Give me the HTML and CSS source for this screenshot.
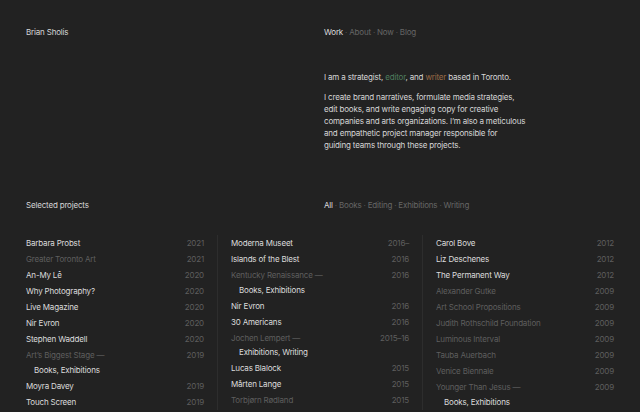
FILE: index.html
```html
<!DOCTYPE html>
<html lang="en">
<head>
<meta charset="utf-8">
<title>Brian Sholis</title>
<link rel="stylesheet" href="styles.css">
</head>
<body>
<header class="top">
  <div class="name">Brian Sholis</div>
  <nav class="nav"><span class="on">Work</span><span class="sep">·</span>About<span class="sep">·</span>Now<span class="sep">·</span>Blog</nav>
</header>

<section class="intro">
  <div></div>
  <div class="bio">
    <p>I am a strategist, <span class="green">editor</span>, and <span class="orange">writer</span> based in Toronto.</p>
    <p>I create brand narratives, formulate media strategies,<br>edit books, and write engaging copy for creative<br>companies and arts organizations. I’m also a meticulous<br>and empathetic project manager responsible for<br>guiding teams through these projects.</p>
  </div>
</section>

<section class="projhead">
  <div class="name">Selected projects</div>
  <nav class="nav"><span class="on">All</span><span class="sep">·</span>Books<span class="sep">·</span>Editing<span class="sep">·</span>Exhibitions<span class="sep">·</span>Writing</nav>
</section>

<section class="projects">
  <ul class="col">
    <li><span class="t">Barbara Probst</span><span class="y">2021</span></li>
    <li class="dim"><span class="t">Greater Toronto Art</span><span class="y">2021</span></li>
    <li><span class="t">An-My Lê</span><span class="y">2020</span></li>
    <li><span class="t">Why Photography?</span><span class="y">2020</span></li>
    <li><span class="t">Live Magazine</span><span class="y">2020</span></li>
    <li><span class="t">Nir Evron</span><span class="y">2020</span></li>
    <li><span class="t">Stephen Waddell</span><span class="y">2020</span></li>
    <li class="dim"><span class="t">Art’s Biggest Stage —</span><span class="y">2019</span><span class="sub">Books, Exhibitions</span></li>
    <li><span class="t">Moyra Davey</span><span class="y">2019</span></li>
    <li><span class="t">Touch Screen</span><span class="y">2019</span></li>
  </ul>
  <ul class="col">
    <li><span class="t">Moderna Museet</span><span class="y">2016–</span></li>
    <li><span class="t">Islands of the Blest</span><span class="y">2016</span></li>
    <li class="dim"><span class="t">Kentucky Renaissance —</span><span class="y">2016</span><span class="sub">Books, Exhibitions</span></li>
    <li><span class="t">Nir Evron</span><span class="y">2016</span></li>
    <li><span class="t">30 Americans</span><span class="y">2016</span></li>
    <li class="dim"><span class="t">Jochen Lempert —</span><span class="y">2015–16</span><span class="sub">Exhibitions, Writing</span></li>
    <li><span class="t">Lucas Blalock</span><span class="y">2015</span></li>
    <li><span class="t">Mårten Lange</span><span class="y">2015</span></li>
    <li class="dim"><span class="t">Torbjørn Rødland</span><span class="y">2015</span></li>
  </ul>
  <ul class="col">
    <li><span class="t">Carol Bove</span><span class="y">2012</span></li>
    <li><span class="t">Liz Deschenes</span><span class="y">2012</span></li>
    <li><span class="t">The Permanent Way</span><span class="y">2012</span></li>
    <li class="dim"><span class="t">Alexander Gutke</span><span class="y">2009</span></li>
    <li class="dim"><span class="t">Art School Propositions</span><span class="y">2009</span></li>
    <li class="dim"><span class="t">Judith Rothschild Foundation</span><span class="y">2009</span></li>
    <li class="dim"><span class="t">Luminous Interval</span><span class="y">2009</span></li>
    <li class="dim"><span class="t">Tauba Auerbach</span><span class="y">2009</span></li>
    <li class="dim"><span class="t">Venice Biennale</span><span class="y">2009</span></li>
    <li class="dim"><span class="t">Younger Than Jesus —</span><span class="y">2009</span><span class="sub">Books, Exhibitions</span></li>
  </ul>
</section>
</body>
</html>
```

FILE: styles.css
```css
html, body {
  margin: 0;
  padding: 0;
  background: #222222;
}
body {
  padding: 26px 26px 0;
  font-family: Inter, "Liberation Sans", Arial, sans-serif;
  font-size: 8px;
  letter-spacing: -0.18px;
  line-height: 12px;
  color: #dcdcdc;
  height: 412px;
  box-sizing: border-box;
  overflow: hidden;
}
.top, .projhead, .intro {
  display: grid;
  grid-template-columns: 298px 1fr;
}
.name { color: #d6d6d6; }
.nav { color: #666; }
.nav .on { color: #dcdcdc; }
.nav .sep { margin: 0 2px; color: #555; }

.intro { margin-top: 33px; }
.bio p { margin: 0 0 8.2px; color: #d6d6d6; }
.green { color: #4e7d5e; }
.orange { color: #9a6a46; }

.projhead { margin-top: 39.6px; }

.projects {
  display: flex;
  margin-top: 24.4px;
}
.col {
  list-style: none;
  margin: 0;
  padding: 0 13px;
  width: 178px;
  flex: none;
}
.col:first-child { padding-left: 0; }
.col:last-child { padding-right: 0; }
.col + .col { border-left: 1px solid #2d2d2d; }
.col li {
  display: flex;
  flex-wrap: wrap;
  justify-content: space-between;
  padding: 2px 0;
}
.col .t { color: #dcdcdc; }
.col .y { color: #5e5e5e; }
.col .dim .t { color: #5e5e5e; }
.col .sub {
  flex-basis: 100%;
  padding-left: 8px;
  margin-top: 2.4px;
  color: #dcdcdc;
}
```
